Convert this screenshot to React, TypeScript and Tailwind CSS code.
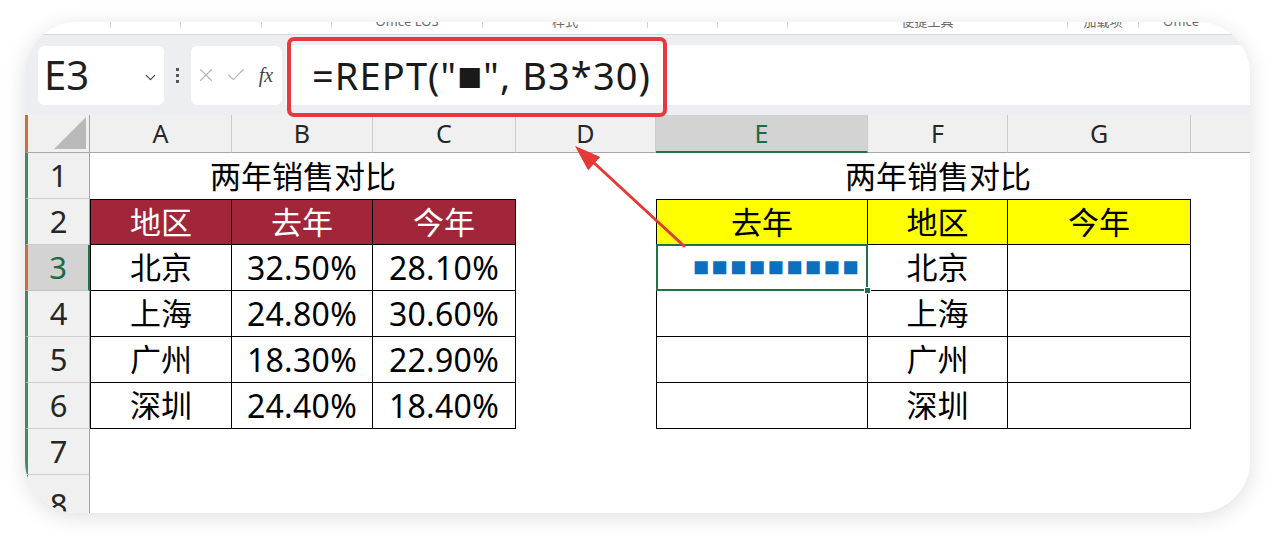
import { ChevronDown, X, Check } from 'lucide-react';

const FONT = "font-['Noto_Sans','Noto_Sans_CJK_SC',sans-serif]";

const LEFT = [
  ['北京', '32.50%', '28.10%'],
  ['上海', '24.80%', '30.60%'],
  ['广州', '18.30%', '22.90%'],
  ['深圳', '24.40%', '18.40%'],
];

function RowHdr({ n, sel }: { n: number; sel?: boolean }) {
  if (sel) {
    return (
      <div className="flex items-center justify-center bg-[#d3d3d3] text-[#1d6b40] border-b border-b-[#c4c4c4] border-r-2 border-r-[#217346] border-l-[3px] border-l-[#c9703a]">
        {n}
      </div>
    );
  }
  return (
    <div className="flex items-center justify-center bg-[#f0f0f0] text-[#262626] border-b border-b-[#cfcfcf] border-r border-r-[#a3a3a3] border-l-[3px] border-l-[#3f8b65]">
      {n}
    </div>
  );
}

function Ribbon() {
  return (
    <div className="h-[12px] flex text-[13px] leading-[13px] text-[#6a6a6a] overflow-hidden">
      <div className="w-[86px] border-r border-[#d4d4d4] h-[6px]" />
      <div className="w-[70px] border-r border-[#d4d4d4] h-[6px]" />
      <div className="w-[81px] border-r border-[#d4d4d4] h-[6px]" />
      <div className="w-[70px] border-r border-[#d4d4d4] h-[6px]" />
      <div className="w-[151px] border-r border-[#d4d4d4] h-[6px] flex justify-center">
        <span className="-mt-[7px]">Office LOS</span>
      </div>
      <div className="w-[165px] border-r border-[#d4d4d4] h-[6px] flex justify-center">
        <span className="-mt-[7px]">样式</span>
      </div>
      <div className="w-[70px] border-r border-[#d4d4d4] h-[6px]" />
      <div className="w-[70px] border-r border-[#d4d4d4] h-[6px]" />
      <div className="w-[280px] border-r border-[#d4d4d4] h-[6px] flex justify-center">
        <span className="-mt-[7px]">便捷工具</span>
      </div>
      <div className="w-[71px] border-r border-[#d4d4d4] h-[6px] flex justify-center">
        <span className="-mt-[7px]">加载项</span>
      </div>
      <div className="flex-1 h-[6px] pl-[24px]">
        <span className="-mt-[7px] block">Office</span>
      </div>
    </div>
  );
}

function FormulaBar() {
  return (
    <div className="h-[81px] bg-[#eceef1] border-t border-[#d5d9de] flex items-center pl-[13px]">
      <div className="w-[126px] h-[59px] bg-white rounded-[6px] flex items-center justify-between pl-[6px] pr-[5px]">
        <span className="text-[40px] leading-none text-[#1f1f1f]">E3</span>
        <ChevronDown size={17} strokeWidth={1.6} className="text-[#3c3c3c] mt-[4px]" />
      </div>
      <div className="w-[27px] flex flex-col items-center gap-[3px]">
        <div className="w-[3px] h-[3px] bg-[#555]" />
        <div className="w-[3px] h-[3px] bg-[#555]" />
        <div className="w-[3px] h-[3px] bg-[#555]" />
      </div>
      <div className="w-[91px] h-[59px] bg-white rounded-[6px] flex items-center pl-[3px] gap-[6px]">
        <div className="w-[24px] flex justify-center">
          <X size={22} strokeWidth={1.2} className="text-[#b4b4b4]" />
        </div>
        <div className="w-[24px] flex justify-center">
          <Check size={22} strokeWidth={1.2} className="text-[#b4b4b4]" />
        </div>
        <div className="w-[24px] flex justify-center">
          <span className="font-['Liberation_Serif',serif] italic text-[20px] text-[#444]">fx</span>
        </div>
      </div>
      <div className="flex-1 h-[60px] bg-white ml-[4px] flex items-center pl-[26px]">
        <span className="text-[38px] leading-none text-[#1a1a1a] tracking-[1.1px]">
          =REPT(&quot;<span className="text-[25px] align-[2px]">■</span>&quot;, B3*30)
        </span>
      </div>
    </div>
  );
}

export default function App() {
  const hdr = 'flex items-center justify-center bg-[#f0f0f0] text-[#262626] border-r border-r-[#cacaca] border-b border-b-[#a8a8a8]';
  const bl = 'flex items-center justify-center border-black';

  return (
    <div className={`relative w-[1275px] h-[538px] bg-white overflow-hidden pt-[22px] pl-[25px] ${FONT}`}>
      <div className="w-[1225px] h-[491px] rounded-[52px] overflow-hidden bg-white shadow-[0_4px_22px_rgba(0,0,0,0.13)]">
        <Ribbon />
        <FormulaBar />

        <div className="grid grid-cols-[65px_142px_141px_143px_140px_212px_140px_183px_1fr] grid-rows-[38px_repeat(8,46px)] text-[31px] leading-none text-black">
          {/* column headers */}
          <div className="flex items-end justify-end pr-[3px] pb-[3px] bg-[#f0f0f0] border-r border-r-[#a3a3a3] border-b border-b-[#a8a8a8] border-l-[3px] border-l-[#c9703a]">
            <div className="w-[32px] h-[32px] bg-[#b9b9b9] [clip-path:polygon(100%_0,100%_100%,0_100%)]" />
          </div>
          <div className={`${hdr} text-[25px]`}>A</div>
          <div className={`${hdr} text-[25px]`}>B</div>
          <div className={`${hdr} text-[25px]`}>C</div>
          <div className={`${hdr} text-[25px]`}>D</div>
          <div className="flex items-center justify-center bg-[#d3d3d3] text-[#1d6b40] text-[25px] border-r border-r-[#cacaca] border-b-2 border-b-[#217346]">
            E
          </div>
          <div className={`${hdr} text-[25px]`}>F</div>
          <div className={`${hdr} text-[25px]`}>G</div>
          <div className="bg-[#f0f0f0] border-b border-b-[#a8a8a8]" />

          {/* row 1 */}
          <RowHdr n={1} />
          <div className="col-span-3 flex items-center justify-center">两年销售对比</div>
          <div />
          <div className="col-span-3 flex items-center justify-center pl-[29px]">两年销售对比</div>
          <div />

          {/* row 2 */}
          <RowHdr n={2} />
          <div className={`${bl} bg-[#a12639] text-white border-l border-t border-r border-b`}>地区</div>
          <div className={`${bl} bg-[#a12639] text-white border-t border-r border-b`}>去年</div>
          <div className={`${bl} bg-[#a12639] text-white border-t border-r border-b`}>今年</div>
          <div />
          <div className={`${bl} bg-[#ffff00] border-l border-t border-r border-b`}>去年</div>
          <div className={`${bl} bg-[#ffff00] border-t border-r border-b`}>地区</div>
          <div className={`${bl} bg-[#ffff00] border-t border-r border-b`}>今年</div>
          <div />

          {/* rows 3-6 */}
          {LEFT.map((r, i) => (
            <div key={r[0]} className="contents">
              <RowHdr n={i + 3} sel={i === 0} />
              <div className={`${bl} border-l border-r border-b`}>{r[0]}</div>
              <div className={`${bl} border-r border-b text-[32px] tracking-[0.3px]`}>{r[1]}</div>
              <div className={`${bl} border-r border-b text-[32px] tracking-[0.3px]`}>{r[2]}</div>
              <div />
              {i === 0 ? (
                <div className="relative flex items-center justify-end pr-[6px] border-l border-r border-b border-black">
                  <span className="font-['Liberation_Sans',sans-serif] text-[#0b6fc0] text-[27px] tracking-[2.4px]">■■■■■■■■■</span>
                  <div className="absolute -left-px -top-px -right-px -bottom-px border-2 border-[#217346]" />
                  <div className="absolute -right-[4px] -bottom-[4px] w-[7px] h-[7px] bg-[#217346] border border-white" />
                </div>
              ) : (
                <div className={`${bl} border-l border-r border-b`} />
              )}
              <div className={`${bl} border-r border-b`}>{r[0]}</div>
              <div className={`${bl} border-r border-b`} />
              <div />
            </div>
          ))}

          {/* rows 7-8 */}
          <RowHdr n={7} />
          <div className="col-span-8" />
          <div className="flex justify-center pt-[14px] bg-[#f0f0f0] text-[#262626] border-r border-r-[#a3a3a3] border-l-[3px] border-l-[#3f8b65]">
            8
          </div>
          <div className="col-span-8" />
        </div>
      </div>

      {/* annotation: red box around the formula */}
      <div className="absolute left-[287px] top-[37px] w-[380px] h-[80px] border-4 border-[#e8383d] rounded-[7px]" />

      {/* annotation: arrow */}
      <svg className="absolute left-0 top-0 pointer-events-none" width="1275" height="538" viewBox="0 0 1275 538">
        <line x1="684" y1="246" x2="592" y2="161" stroke="#e53935" strokeWidth="3" strokeLinecap="round" />
        <polygon points="575,146 600.3,157 588.1,170.2" fill="#e53935" />
      </svg>
    </div>
  );
}
